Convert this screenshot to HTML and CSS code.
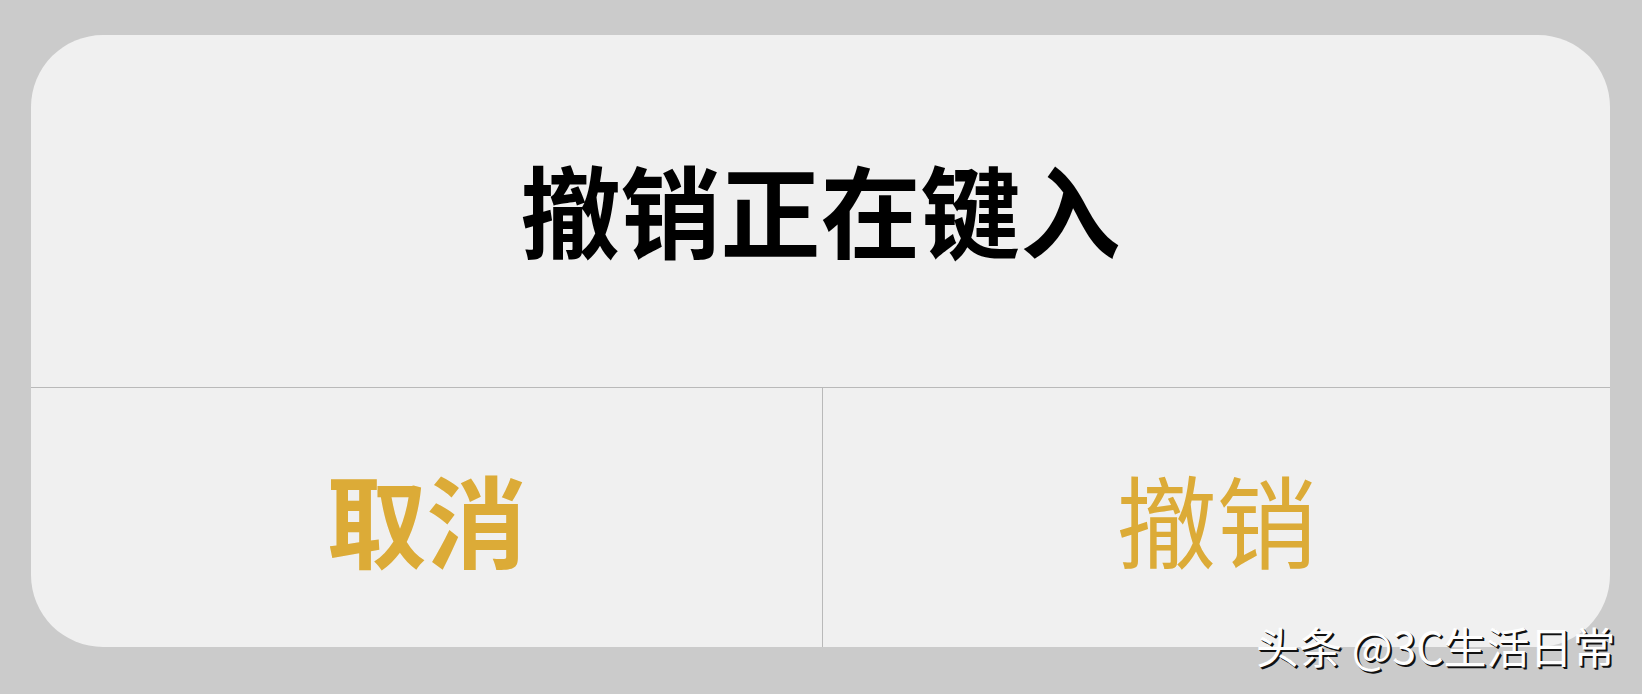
FILE: index.html
```html
<!DOCTYPE html>
<html lang="zh-CN">
<head>
<meta charset="utf-8">
<title>撤销正在键入</title>
<link rel="stylesheet" href="styles.css">
</head>
<body>
<div class="page">
  <div class="alert">
    <div class="alert-title">撤销正在键入</div>
    <div class="alert-actions">
      <div class="action action-cancel">取消</div>
      <div class="action action-undo">撤销</div>
    </div>
  </div>
  <div class="watermark">头条 @3C生活日常</div>
</div>
</body>
</html>
```
FILE: styles.css
```css
html, body {
  margin: 0;
  padding: 0;
  background: #cbcbcb;
}
.page {
  position: relative;
  width: 1642px;
  height: 694px;
  padding: 35px 0 0 31px;
  box-sizing: border-box;
  overflow: hidden;
  font-family: "Noto Sans CJK SC", "Noto Sans", sans-serif;
}
.alert {
  width: 1579px;
  height: 612px;
  background: #f0f0f0;
  border-radius: 72px;
  overflow: hidden;
  display: flex;
  flex-direction: column;
}
.alert-title {
  height: 353px;
  box-sizing: border-box;
  border-bottom: 1px solid #b9b9b9;
  padding-bottom: 6px;
  display: flex;
  align-items: center;
  justify-content: center;
  font-size: 100px;
  line-height: 1;
  font-weight: 700;
  color: #000;
}
.alert-actions {
  flex: 1;
  display: grid;
  grid-template-columns: 791px 1fr;
}
.action {
  display: flex;
  align-items: center;
  justify-content: center;
  font-size: 100px;
  line-height: 1;
  color: #dcab37;
}
.action-cancel {
  font-weight: 700;
}
.action-undo {
  font-weight: 400;
  border-left: 1px solid #b9b9b9;
}
.watermark {
  position: absolute;
  left: 1256px;
  top: 620px;
  font-size: 43px;
  line-height: 1.2;
  color: #fff;
  font-weight: 400;
  text-shadow: 2px 2px 0 #111, 1px 1px 0 #222;
  white-space: nowrap;
}
```
